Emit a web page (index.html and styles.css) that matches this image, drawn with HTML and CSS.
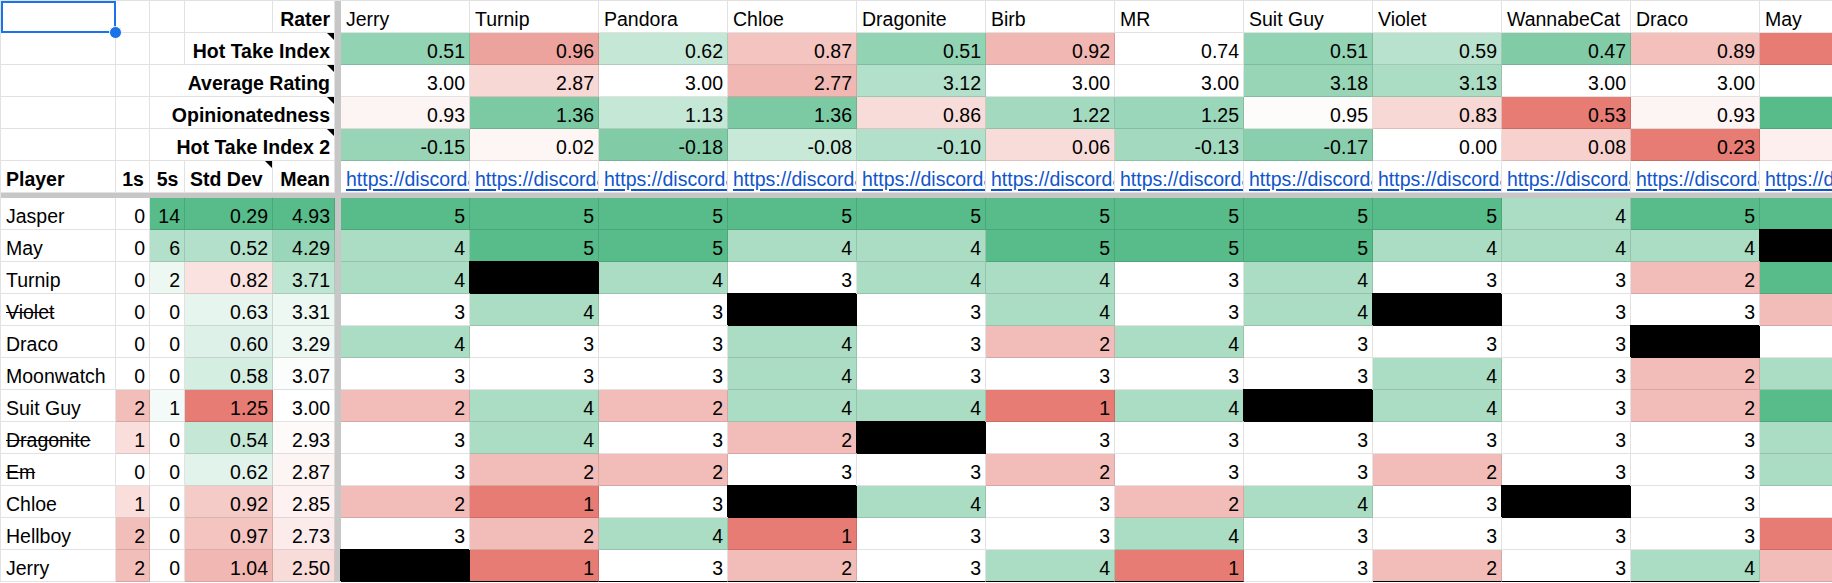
FILE: index.html
```html
<!DOCTYPE html>
<html lang="en">
<head>
<meta charset="utf-8">
<title>Ratings</title>
<link rel="stylesheet" href="styles.css">
</head>
<body>
<div class="sheet">
  <div class="row">
    <div class="c"></div><div class="c"></div><div class="c"></div><div class="c"></div><div class="c b n">Rater</div><div class="fz"></div>
    <div class="c">Jerry</div><div class="c">Turnip</div><div class="c">Pandora</div><div class="c">Chloe</div><div class="c">Dragonite</div><div class="c">Birb</div><div class="c">MR</div><div class="c">Suit Guy</div><div class="c">Violet</div><div class="c">WannabeCat</div><div class="c">Draco</div><div class="c">May</div>
  </div>
  <div class="row">
    <div class="c"></div><div class="c"></div><div class="c"></div><div class="c b n s2 note">Hot Take Index</div><div class="fz"></div>
    <div class="c n" style="background:#92d3b3">0.51</div><div class="c n" style="background:#eda39d">0.96</div><div class="c n" style="background:#c4e7d6">0.62</div><div class="c n" style="background:#f4c4c0">0.87</div><div class="c n" style="background:#92d3b3">0.51</div><div class="c n" style="background:#f1b7b2">0.92</div><div class="c n">0.74</div><div class="c n" style="background:#92d3b3">0.51</div><div class="c n" style="background:#b8e2ce">0.59</div><div class="c n" style="background:#81cca7">0.47</div><div class="c n" style="background:#f3c0bc">0.89</div><div class="c n" style="background:#e67c73"></div>
  </div>
  <div class="row">
    <div class="c"></div><div class="c"></div><div class="c b n s3 note">Average Rating</div><div class="fz"></div>
    <div class="c n">3.00</div><div class="c n" style="background:#f8d8d5">2.87</div><div class="c n">3.00</div><div class="c n" style="background:#f1b7b2">2.77</div><div class="c n" style="background:#b3e0ca">3.12</div><div class="c n">3.00</div><div class="c n">3.00</div><div class="c n" style="background:#97d5b6">3.18</div><div class="c n" style="background:#abddc5">3.13</div><div class="c n">3.00</div><div class="c n">3.00</div><div class="c n"></div>
  </div>
  <div class="row">
    <div class="c"></div><div class="c"></div><div class="c b n s3 note">Opinionatedness</div><div class="fz"></div>
    <div class="c n" style="background:#fdf5f4">0.93</div><div class="c n" style="background:#7ccaa4">1.36</div><div class="c n" style="background:#c4e7d6">1.13</div><div class="c n" style="background:#7ccaa4">1.36</div><div class="c n" style="background:#f8dcd9">0.86</div><div class="c n" style="background:#a3dabf">1.22</div><div class="c n" style="background:#9ad6b9">1.25</div><div class="c n" style="background:#fefbfb">0.95</div><div class="c n" style="background:#f8d8d5">0.83</div><div class="c n" style="background:#e67c73">0.53</div><div class="c n" style="background:#fdf5f4">0.93</div><div class="c n" style="background:#57bb8a"></div>
  </div>
  <div class="row">
    <div class="c"></div><div class="c"></div><div class="c b n s3 note">Hot Take Index 2</div><div class="fz"></div>
    <div class="c n" style="background:#97d5b6">-0.15</div><div class="c n" style="background:#fdf6f5">0.02</div><div class="c n" style="background:#81cca7">-0.18</div><div class="c n" style="background:#c8e9d8">-0.08</div><div class="c n" style="background:#b3e0ca">-0.10</div><div class="c n" style="background:#f8dcd9">0.06</div><div class="c n" style="background:#a3dabf">-0.13</div><div class="c n" style="background:#89cfad">-0.17</div><div class="c n">0.00</div><div class="c n" style="background:#f6d1ce">0.08</div><div class="c n" style="background:#e67c73">0.23</div><div class="c n" style="background:#fcefee"></div>
  </div>
  <div class="row">
    <div class="c b">Player</div><div class="c b ctr">1s</div><div class="c b ctr">5s</div><div class="c b note">Std Dev</div><div class="c b n">Mean</div><div class="fz"></div>
    <div class="c"><a class="lk" href="#">https://discordapp.com/channels</a></div><div class="c"><a class="lk" href="#">https://discordapp.com/channels</a></div><div class="c"><a class="lk" href="#">https://discordapp.com/channels</a></div><div class="c"><a class="lk" href="#">https://discordapp.com/channels</a></div><div class="c"><a class="lk" href="#">https://discordapp.com/channels</a></div><div class="c"><a class="lk" href="#">https://discordapp.com/channels</a></div><div class="c"><a class="lk" href="#">https://discordapp.com/channels</a></div><div class="c"><a class="lk" href="#">https://discordapp.com/channels</a></div><div class="c"><a class="lk" href="#">https://discordapp.com/channels</a></div><div class="c"><a class="lk" href="#">https://discordapp.com/channels</a></div><div class="c"><a class="lk" href="#">https://discordapp.com/channels</a></div><div class="c"><a class="lk" href="#">https://discordapp.com/channels</a></div>
  </div>
  <div class="fzrow"></div>

  <div class="row">
    <div class="c">Jasper</div><div class="c n">0</div><div class="c n" style="background:#57bb8a">14</div><div class="c n" style="background:#57bb8a">0.29</div><div class="c n" style="background:#57bb8a">4.93</div><div class="fz"></div>
    <div class="c n v5">5</div><div class="c n v5">5</div><div class="c n v5">5</div><div class="c n v5">5</div><div class="c n v5">5</div><div class="c n v5">5</div><div class="c n v5">5</div><div class="c n v5">5</div><div class="c n v5">5</div><div class="c n v4">4</div><div class="c n v5">5</div><div class="c n v5">5</div>
  </div>
  <div class="row">
    <div class="c">May</div><div class="c n">0</div><div class="c n" style="background:#b3e0ca">6</div><div class="c n" style="background:#b3e0ca">0.52</div><div class="c n" style="background:#9ad6b9">4.29</div><div class="fz"></div>
    <div class="c n v4">4</div><div class="c n v5">5</div><div class="c n v5">5</div><div class="c n v4">4</div><div class="c n v4">4</div><div class="c n v5">5</div><div class="c n v5">5</div><div class="c n v5">5</div><div class="c n v4">4</div><div class="c n v4">4</div><div class="c n v4">4</div><div class="c n vx"></div>
  </div>
  <div class="row">
    <div class="c">Turnip</div><div class="c n">0</div><div class="c n" style="background:#eef8f3">2</div><div class="c n" style="background:#f9e2e0">0.82</div><div class="c n" style="background:#bfe5d3">3.71</div><div class="fz"></div>
    <div class="c n v4">4</div><div class="c n vx"></div><div class="c n v4">4</div><div class="c n">3</div><div class="c n v4">4</div><div class="c n v4">4</div><div class="c n">3</div><div class="c n v4">4</div><div class="c n">3</div><div class="c n">3</div><div class="c n v2">2</div><div class="c n v5">5</div>
  </div>
  <div class="row">
    <div class="c"><s>Violet</s></div><div class="c n">0</div><div class="c n">0</div><div class="c n" style="background:#e6f5ed">0.63</div><div class="c n" style="background:#eef8f3">3.31</div><div class="fz"></div>
    <div class="c n">3</div><div class="c n v4">4</div><div class="c n">3</div><div class="c n vx"></div><div class="c n">3</div><div class="c n v4">4</div><div class="c n">3</div><div class="c n v4">4</div><div class="c n vx"></div><div class="c n">3</div><div class="c n">3</div><div class="c n v2">2</div>
  </div>
  <div class="row">
    <div class="c">Draco</div><div class="c n">0</div><div class="c n">0</div><div class="c n" style="background:#ddf1e8">0.60</div><div class="c n" style="background:#eef8f3">3.29</div><div class="fz"></div>
    <div class="c n v4">4</div><div class="c n">3</div><div class="c n">3</div><div class="c n v4">4</div><div class="c n">3</div><div class="c n v2">2</div><div class="c n v4">4</div><div class="c n">3</div><div class="c n">3</div><div class="c n">3</div><div class="c n vx"></div><div class="c n">3</div>
  </div>
  <div class="row">
    <div class="c">Moonwatch</div><div class="c n">0</div><div class="c n">0</div><div class="c n" style="background:#d5eee2">0.58</div><div class="c n" style="background:#fafdfb">3.07</div><div class="fz"></div>
    <div class="c n">3</div><div class="c n">3</div><div class="c n">3</div><div class="c n v4">4</div><div class="c n">3</div><div class="c n">3</div><div class="c n">3</div><div class="c n">3</div><div class="c n v4">4</div><div class="c n">3</div><div class="c n v2">2</div><div class="c n v4">4</div>
  </div>
  <div class="row">
    <div class="c">Suit Guy</div><div class="c n" style="background:#f2beb9">2</div><div class="c n" style="background:#f3faf7">1</div><div class="c n" style="background:#e67c73">1.25</div><div class="c n">3.00</div><div class="fz"></div>
    <div class="c n v2">2</div><div class="c n v4">4</div><div class="c n v2">2</div><div class="c n v4">4</div><div class="c n v4">4</div><div class="c n v1">1</div><div class="c n v4">4</div><div class="c n vx"></div><div class="c n v4">4</div><div class="c n">3</div><div class="c n v2">2</div><div class="c n v5">5</div>
  </div>
  <div class="row">
    <div class="c"><s>Dragonite</s></div><div class="c n" style="background:#f9dedc">1</div><div class="c n">0</div><div class="c n" style="background:#c4e7d6">0.54</div><div class="c n" style="background:#fefaf9">2.93</div><div class="fz"></div>
    <div class="c n">3</div><div class="c n v4">4</div><div class="c n">3</div><div class="c n v2">2</div><div class="c n vx"></div><div class="c n">3</div><div class="c n">3</div><div class="c n">3</div><div class="c n">3</div><div class="c n">3</div><div class="c n">3</div><div class="c n v4">4</div>
  </div>
  <div class="row">
    <div class="c"><s>Em</s></div><div class="c n">0</div><div class="c n">0</div><div class="c n" style="background:#e1f3ea">0.62</div><div class="c n" style="background:#fdf5f4">2.87</div><div class="fz"></div>
    <div class="c n">3</div><div class="c n v2">2</div><div class="c n v2">2</div><div class="c n">3</div><div class="c n">3</div><div class="c n v2">2</div><div class="c n">3</div><div class="c n">3</div><div class="c n v2">2</div><div class="c n">3</div><div class="c n">3</div><div class="c n v4">4</div>
  </div>
  <div class="row">
    <div class="c">Chloe</div><div class="c n" style="background:#f9dedc">1</div><div class="c n">0</div><div class="c n" style="background:#f5cbc7">0.92</div><div class="c n" style="background:#fdf2f1">2.85</div><div class="fz"></div>
    <div class="c n v2">2</div><div class="c n v1">1</div><div class="c n">3</div><div class="c n vx"></div><div class="c n v4">4</div><div class="c n">3</div><div class="c n v2">2</div><div class="c n v4">4</div><div class="c n">3</div><div class="c n vx"></div><div class="c n">3</div><div class="c n">3</div>
  </div>
  <div class="row">
    <div class="c">Hellboy</div><div class="c n" style="background:#f2beb9">2</div><div class="c n">0</div><div class="c n" style="background:#f4c4c0">0.97</div><div class="c n" style="background:#fbebea">2.73</div><div class="fz"></div>
    <div class="c n">3</div><div class="c n v2">2</div><div class="c n v4">4</div><div class="c n v1">1</div><div class="c n">3</div><div class="c n">3</div><div class="c n v4">4</div><div class="c n">3</div><div class="c n">3</div><div class="c n">3</div><div class="c n">3</div><div class="c n v1">1</div>
  </div>
  <div class="row">
    <div class="c">Jerry</div><div class="c n" style="background:#f2beb9">2</div><div class="c n">0</div><div class="c n" style="background:#f1b7b2">1.04</div><div class="c n" style="background:#f8dcd9">2.50</div><div class="fz"></div>
    <div class="c n vx"></div><div class="c n v1 bb">1</div><div class="c n bb">3</div><div class="c n v2 bb">2</div><div class="c n bb">3</div><div class="c n v4 bb">4</div><div class="c n v1 bb">1</div><div class="c n">3</div><div class="c n v2 bb">2</div><div class="c n bb">3</div><div class="c n v4 bb">4</div><div class="c n v2">2</div>
  </div>
</div>
<div class="sel"><span class="handle"></span></div>
</body>
</html>
```
FILE: styles.css
```css
html, body {
  margin: 0;
  padding: 0;
  background: #fff;
  overflow: hidden;
}
body {
  width: 1832px;
  height: 583px;
  position: relative;
  font-family: "Liberation Sans", Arial, sans-serif;
  font-size: 19.5px;
  color: #000;
}
.sheet {
  display: grid;
  grid-template-columns: 115px 34px 35px 88px 62px 6px repeat(12, 129px);
  grid-template-rows: repeat(6, 32px) 5px repeat(12, 32px);
  border-top: 1px solid #e2e2e2;
  border-left: 1px solid #e2e2e2;
  width: max-content;
}
.row { display: contents; }
.c {
  box-sizing: border-box;
  border-right: 1px solid rgba(0, 0, 0, 0.115);
  border-bottom: 1px solid rgba(0, 0, 0, 0.115);
  padding: 0 4px 2px 5px;
  display: flex;
  align-items: flex-end;
  justify-content: flex-start;
  overflow: hidden;
  white-space: nowrap;
  line-height: 22px;
}
.n { justify-content: flex-end; }
.ctr { justify-content: center; }
.b { font-weight: bold; }
.s2 { grid-column: span 2; }
.s3 { grid-column: span 3; }
.fz { background: #c7c7c7; }
.fzrow { grid-column: 1 / -1; background: #c7c7c7; }
.note { position: relative; }
.note::after {
  content: "";
  position: absolute;
  top: 0;
  right: 0;
  border-top: 7px solid #000;
  border-left: 7px solid transparent;
}
.lk {
  color: #1155cc;
  text-decoration: underline;
  text-decoration-thickness: 2px;
  text-underline-offset: 3px;
}
.v5 { background: #57bb8a; }
.v4 { background: #abddc4; }
.v2 { background: #f2bdb9; }
.v1 { background: #e67c73; }
.vx {
  background: #000;
  border-color: #000;
  box-shadow: -1px -1px 0 #000;
}
.bb { border-bottom-color: #000; }
.sel {
  position: absolute;
  left: 1px;
  top: 1px;
  width: 115px;
  height: 32px;
  box-sizing: border-box;
  border: 2px solid #1a73e8;
}
.handle {
  position: absolute;
  right: -8px;
  bottom: -8px;
  width: 11px;
  height: 11px;
  border-radius: 50%;
  background: #1a73e8;
  border: 1px solid #fff;
}
```
